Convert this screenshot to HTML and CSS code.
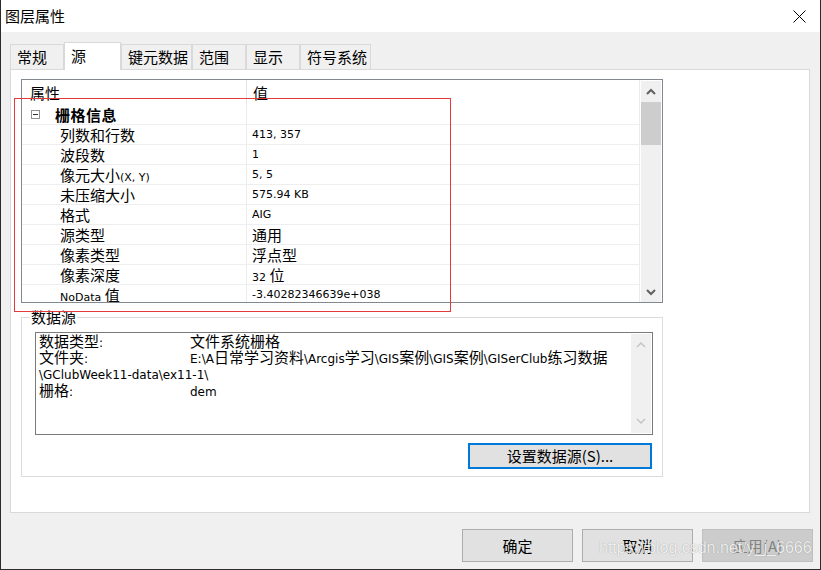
FILE: index.html
```html
<!DOCTYPE html>
<html lang="zh-CN">
<head>
  <meta charset="UTF-8" />
  <title>图层属性</title>
  <link rel="stylesheet" href="styles.css">
</head>
<body>

<div class="window">
  <div class="titlebar">
    <span class="title">图层属性</span>
    <svg class="close" width="13" height="13" viewBox="0 0 13 13">
      <path d="M0.5 0.5 L12.5 12.5 M12.5 0.5 L0.5 12.5" stroke="#000" stroke-width="1" fill="none" />
    </svg>
  </div>

  <div class="main">
    <div class="tabs">
      <div class="tab">常规</div>
      <div class="tab active">源</div>
      <div class="tab">键元数据</div>
      <div class="tab">范围</div>
      <div class="tab">显示</div>
      <div class="tab">符号系统</div>
    </div>

    <div class="panel">
      <div class="grid">
        <div class="grid-main">
          <div class="ghead">
            <div class="name">属性</div>
            <div class="val">值</div>
          </div>
          <div class="row cat">
            <div class="name"><span class="toggle"></span><b>栅格信息</b></div>
            <div class="val"></div>
          </div>
          <div class="row">
            <div class="name">列数和行数</div>
            <div class="val en">413, 357</div>
          </div>
          <div class="row">
            <div class="name">波段数</div>
            <div class="val en">1</div>
          </div>
          <div class="row">
            <div class="name">像元大小<span class="en">(X, Y)</span></div>
            <div class="val en">5, 5</div>
          </div>
          <div class="row">
            <div class="name">未压缩大小</div>
            <div class="val en">575.94 KB</div>
          </div>
          <div class="row">
            <div class="name">格式</div>
            <div class="val en">AIG</div>
          </div>
          <div class="row">
            <div class="name">源类型</div>
            <div class="val">通用</div>
          </div>
          <div class="row">
            <div class="name">像素类型</div>
            <div class="val">浮点型</div>
          </div>
          <div class="row">
            <div class="name">像素深度</div>
            <div class="val"><span class="en">32 </span>位</div>
          </div>
          <div class="row">
            <div class="name"><span class="en">NoData </span>值</div>
            <div class="val en">-3.40282346639e+038</div>
          </div>
        </div>
        <div class="scrollbar">
          <div class="arrow">
            <svg width="10" height="7" viewBox="0 0 10 7"><polyline points="1,6 5,2 9,6" fill="none" stroke="#606060" stroke-width="2" /></svg>
          </div>
          <div class="thumb"></div>
          <div class="track"></div>
          <div class="arrow">
            <svg width="10" height="7" viewBox="0 0 10 7"><polyline points="1,1 5,5 9,1" fill="none" stroke="#606060" stroke-width="2" /></svg>
          </div>
        </div>
      </div>

      <fieldset class="source">
        <legend>数据源</legend>
        <div class="textbox">
          <div class="txt">
            <div><span class="lbl">数据类型<span class="en">:</span></span>文件系统栅格</div>
            <div><span class="lbl">文件夹<span class="en">:</span></span><span class="en">E:\A</span>日常学习资料<span class="en">\Arcgis</span>学习<span class="en">\GIS</span>案例<span class="en">\GIS</span>案例<span class="en">\GISerClub</span>练习数据</div>
            <div><span class="en">\GClubWeek11-data\ex11-1\</span></div>
            <div><span class="lbl">栅格<span class="en">:</span></span><span class="en">dem</span></div>
          </div>
          <div class="tb-scroll">
            <svg width="10" height="7" viewBox="0 0 10 7"><polyline points="1,6 5,2 9,6" fill="none" stroke="#c4c4c4" stroke-width="1.5" /></svg>
            <svg width="10" height="7" viewBox="0 0 10 7"><polyline points="1,1 5,5 9,1" fill="none" stroke="#c4c4c4" stroke-width="1.5" /></svg>
          </div>
        </div>
        <div class="btn-row">
          <button class="btn-source">设置数据源(S)...</button>
        </div>
      </fieldset>
    </div>

    <div class="footer">
      <button>确定</button>
      <button>取消</button>
      <button disabled>应用(A)</button>
    </div>
  </div>

  <div class="mark">https://blog.csdn.net/y_j_6666</div>
  <div class="redbox"></div>
</div>

</body>
</html>
```

FILE: styles.css
```css
* {
  box-sizing: border-box;
}
body {
  margin: 0;
  background: #f0f0f0;
  font-family: "Noto Sans CJK SC", sans-serif;
  font-size: 15px;
  color: #000;
}
.en {
  font-family: "DejaVu Sans", sans-serif;
  font-size: 11px;
}
.window {
  position: relative;
  width: 821px;
  height: 570px;
  border: 1px solid #2b2b2b;
  border-top: 0;
  background: #f0f0f0;
  display: flex;
  flex-direction: column;
}
.titlebar {
  height: 32px;
  background: #fff;
  display: flex;
  align-items: center;
  justify-content: space-between;
  padding: 0 14px 0 4px;
  line-height: 32px;
}
.main {
  flex: 1;
  padding-top: 10px;
}

/* tabs */
.tabs {
  display: flex;
  align-items: flex-end;
  padding-left: 9px;
}
.tab {
  min-width: 54px;
  height: 25px;
  line-height: 23px;
  padding: 0 3px 0 6px;
  border: 1px solid #d9d9d9;
  border-bottom: 0;
  background: #f0f0f0;
}
.tab.active {
  position: relative;
  min-width: 57px;
  height: 28px;
  line-height: 25px;
  margin-bottom: -1px;
  background: #fff;
}

.panel {
  margin: 0 10px 0 9px;
  height: 444px;
  background: #fff;
  border: 1px solid #d9d9d9;
  padding: 9px 10px 0;
}

/* property grid */
.grid {
  width: 642px;
  height: 224px;
  border: 1px solid #828790;
  display: flex;
  overflow: hidden;
}
.grid-main {
  width: 618px;
  border-right: 1px solid #ececec;
}
.ghead {
  height: 25px;
  line-height: 25px;
  display: flex;
}
.ghead .name {
  width: 225px;
  border-right: 1px solid #e5e5e5;
  padding-left: 8px;
}
.ghead .val {
  padding-left: 6px;
}
.row {
  height: 20px;
  line-height: 19px;
  border-bottom: 1px solid #eeeeee;
  display: flex;
}
.row .name {
  width: 225px;
  flex-shrink: 0;
  border-right: 1px solid #ececec;
  padding-left: 38px;
}
.row .val {
  padding-left: 5px;
}
.row.cat .name {
  display: flex;
  align-items: center;
  padding-left: 9px;
}
.row.cat b {
  margin-left: 15px;
  letter-spacing: 0.5px;
}
.toggle {
  width: 9px;
  height: 9px;
  border: 1px solid #919191;
  display: flex;
  align-items: center;
  justify-content: center;
}
.toggle::after {
  content: "";
  width: 5px;
  height: 1px;
  background: #333;
}
.scrollbar {
  width: 20px;
  margin: 1px 1px 0;
  background: #f0f0f0;
  display: flex;
  flex-direction: column;
}
.scrollbar .arrow {
  height: 20px;
  display: flex;
  align-items: center;
  justify-content: center;
}
.thumb {
  height: 43px;
  margin-top: 1px;
  background: #cdcdcd;
}
.track {
  flex: 1;
}

/* data source group */
.source {
  margin: 6px 0 0;
  padding: 7px 9px 7px 13px;
  width: 642px;
  min-width: 0;
  border: 1px solid #dcdcdc;
}
.source legend {
  padding: 0 1px;
  margin-left: -5px;
  line-height: 16px;
}
.textbox {
  height: 103px;
  border: 1px solid #7a7a7a;
  display: flex;
  background: #fff;
}
.txt {
  flex: 1;
  padding: 0 0 0 3px;
  line-height: 16.2px;
  white-space: nowrap;
}
.txt .en {
  font-size: 12px;
  line-height: 10px;
}
.lbl {
  display: inline-block;
  width: 151px;
}
.tb-scroll {
  width: 20px;
  margin: 1px 1px 1px 0;
  background: #f0f0f0;
  display: flex;
  flex-direction: column;
  justify-content: space-between;
  align-items: center;
  padding: 7px 0 8px;
}
.btn-row {
  display: flex;
  justify-content: flex-end;
  margin-top: 8px;
  padding-right: 1px;
}
button {
  font-family: "Noto Sans CJK SC", sans-serif;
  font-size: 15px;
  color: #000;
  padding: 0;
}
.btn-source {
  width: 184px;
  height: 26px;
  border: 2px solid #0078d7;
  background: #e1e1e1;
  line-height: 20px;
}

/* dialog buttons */
.footer {
  display: flex;
  justify-content: flex-end;
  gap: 9px;
  padding: 16px 7px 0 0;
}
.footer button {
  width: 111px;
  height: 33px;
  border: 1px solid #adadad;
  background: #e1e1e1;
}
.footer button:disabled {
  background: #cccccc;
  border-color: #bfbfbf;
  color: #838383;
}

/* overlays from the screenshot */
.mark {
  position: absolute;
  left: 598px;
  top: 539px;
  font-family: "Liberation Sans", sans-serif;
  font-size: 16px;
  line-height: 18px;
  color: rgba(255, 255, 255, 0.85);
  text-shadow: 0 0 1px rgba(0, 0, 0, 0.35);
}
.redbox {
  position: absolute;
  left: 13px;
  top: 98px;
  width: 437px;
  height: 214px;
  border: 1px solid #e53a3a;
}
```
